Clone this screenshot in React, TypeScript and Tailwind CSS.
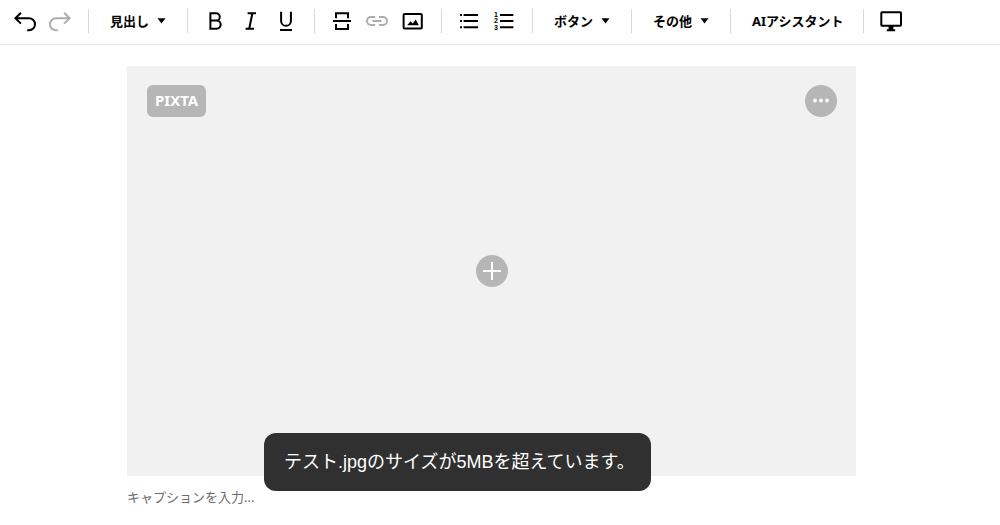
import type { ReactNode } from "react";

const JP = "font-['Noto_Sans','Noto_Sans_CJK_JP',sans-serif]";

function Glyph({ children, className = "" }: { children: ReactNode; className?: string }) {
  return (
    <svg
      viewBox="0 0 24 24"
      className={`size-6 ${className}`}
      fill="none"
      stroke="currentColor"
      strokeWidth="2"
      aria-hidden="true"
    >
      {children}
    </svg>
  );
}

function ToolButton({ label, muted = false, children }: { label: string; muted?: boolean; children: ReactNode }) {
  return (
    <button
      type="button"
      aria-label={label}
      className={`flex h-9 w-9 shrink-0 items-center justify-center ${muted ? "text-[#adadad]" : "text-black"}`}
    >
      {children}
    </button>
  );
}

function Separator() {
  return <div role="separator" className="h-6 w-px shrink-0 bg-[#d9d9d9]" />;
}

function MenuButton({ label }: { label: string }) {
  return (
    <button
      type="button"
      aria-haspopup="menu"
      className="flex h-9 shrink-0 items-center gap-2 px-[21px] text-[13px] leading-5 font-bold whitespace-nowrap"
    >
      {label}
      <svg viewBox="0 0 9 6" className="h-[6px] w-[9px]" fill="currentColor" aria-hidden="true">
        <path d="M0.5 0.3h8L4.5 5.6z" />
      </svg>
    </button>
  );
}

function Group({ children }: { children: ReactNode }) {
  return <div className="flex shrink-0 items-center pr-[10px] pl-2">{children}</div>;
}

function Toolbar() {
  return (
    <header
      role="toolbar"
      className="flex h-[45px] items-center overflow-hidden border-b border-[#e6e6e6] pb-0.5 text-black"
    >
      <div className="flex shrink-0 items-center pr-[9px] pl-[7px]">
        <ToolButton label="元に戻す">
          <Glyph>
            <path d="M7.9 3.8 2.4 9.2l5.5 5.4M2.8 9.2H16a6 6 0 0 1 0 12h-1.8" />
          </Glyph>
        </ToolButton>
        <ToolButton label="やり直す" muted>
          <Glyph>
            <path d="m15.1 3.8 5.5 5.4-5.5 5.4M20.2 9.2H7a6 6 0 0 0 0 12h1.8" />
          </Glyph>
        </ToolButton>
      </div>
      <Separator />
      <MenuButton label="見出し" />
      <Separator />
      <Group>
        <ToolButton label="太字">
          <Glyph>
            <path d="M8.4 4.3h5.8a3.6 3.6 0 0 1 0 7.2H8.4M14.2 11.5h.4a4.1 4.1 0 0 1 0 8.2H8.4V3.3" />
          </Glyph>
        </ToolButton>
        <ToolButton label="斜体">
          <Glyph>
            <path d="M9.6 4.3H18M7.6 19.7H16M14.4 4.3l-3.2 15.4" />
          </Glyph>
        </ToolButton>
        <ToolButton label="下線">
          <Glyph>
            <path d="M7.1 2.7v9.2a4.9 4.9 0 0 0 9.8 0V2.7M6 21h12" />
          </Glyph>
        </ToolButton>
      </Group>
      <Separator />
      <Group>
        <ToolButton label="区切り線">
          <Glyph>
            <path d="M4 12h18M7 9.3v-5h12v5M7 15v5h12v-5" />
          </Glyph>
        </ToolButton>
        <ToolButton label="リンク" muted>
          <Glyph>
            <path d="M10.2 8H6a4 4 0 0 0 0 8h4.2M14 8h4a4 4 0 0 1 0 8h-4M7.5 12h9" />
          </Glyph>
        </ToolButton>
        <ToolButton label="画像">
          <Glyph>
            <rect x="2.6" y="5" width="18.2" height="14.4" rx="1" />
            <path d="M6.2 16.2 9.6 12.3l2.1 2.1 3-4 3.2 5.8z" fill="currentColor" stroke="none" />
          </Glyph>
        </ToolButton>
      </Group>
      <Separator />
      <Group>
        <ToolButton label="箇条書き">
          <Glyph>
            <path d="M4 6h2M4 12h2M4 18.3h2M7.6 6H22M7.6 12H22M7.6 18.3H22" />
          </Glyph>
        </ToolButton>
        <ToolButton label="番号付きリスト">
          <Glyph>
            <path d="M8 6h13.4M8 12h13.4M8 18.3h13.4" />
            <g
              fill="currentColor"
              stroke="none"
              className="font-['Liberation_Sans',sans-serif] text-[7px] font-bold"
            >
              <text x="2" y="8.2">1</text>
              <text x="2" y="14.4">2</text>
              <text x="2" y="20.8">3</text>
            </g>
          </Glyph>
        </ToolButton>
      </Group>
      <Separator />
      <MenuButton label="ボタン" />
      <Separator />
      <MenuButton label="その他" />
      <Separator />
      <button
        type="button"
        className="h-9 shrink-0 pr-[19px] pl-[21px] text-[13px] leading-5 font-bold whitespace-nowrap"
      >
        AIアシスタント
      </button>
      <Separator />
      <Group>
        <ToolButton label="プレビュー">
          <Glyph>
            <rect x="3.3" y="3.3" width="19.7" height="13.4" rx="0.8" />
            <path d="M10.6 17h4.8v3.2h1.8v2H8.8v-2h1.8z" fill="currentColor" stroke="none" />
          </Glyph>
        </ToolButton>
      </Group>
    </header>
  );
}

export default function App() {
  return (
    <div className={`min-h-screen bg-white ${JP}`}>
      <Toolbar />
      <main className="pt-[21px] pr-[17px]">
        <figure className="mx-auto max-w-[729px]">
          <div className="relative flex aspect-video flex-col justify-between bg-[#f1f1f1] px-[19px] py-[19px]">
            <div className="flex items-start justify-between pl-px">
              <button
                type="button"
                className="h-8 rounded-md bg-[#b6b6b6] px-2 pb-0.5 text-[15px] font-bold text-white"
              >
                PIXTA
              </button>
              <button
                type="button"
                aria-label="メニュー"
                className="flex size-8 items-center justify-center rounded-full bg-[#b6b6b6] text-white"
              >
                <Glyph>
                  <g fill="currentColor" stroke="none">
                    <circle cx="6" cy="11.5" r="1.9" />
                    <circle cx="12" cy="11.5" r="1.9" />
                    <circle cx="18" cy="11.5" r="1.9" />
                  </g>
                </Glyph>
              </button>
            </div>
            <button
              type="button"
              aria-label="画像を追加"
              className="flex size-8 items-center justify-center self-center rounded-full bg-[#b6b6b6] text-white"
            >
              <Glyph>
                <path d="M12 3v18M3 12h18" />
              </Glyph>
            </button>
            <div className="h-8" />
            <div
              role="alert"
              className="absolute -bottom-[15px] left-[137px] flex h-[58px] items-center rounded-xl bg-[#303030] pr-4 pl-5 font-['Liberation_Sans','Noto_Sans_CJK_JP',sans-serif] text-lg whitespace-nowrap text-white"
            >
              テスト.jpgのサイズが5MBを超えています。
            </div>
          </div>
          <figcaption className="mt-[11px]">
            <input
              type="text"
              aria-label="キャプション"
              placeholder="キャプションを入力..."
              className="block h-5 w-full text-[13px] leading-5 outline-none placeholder:text-[#6b6b6b]"
            />
          </figcaption>
        </figure>
      </main>
    </div>
  );
}
